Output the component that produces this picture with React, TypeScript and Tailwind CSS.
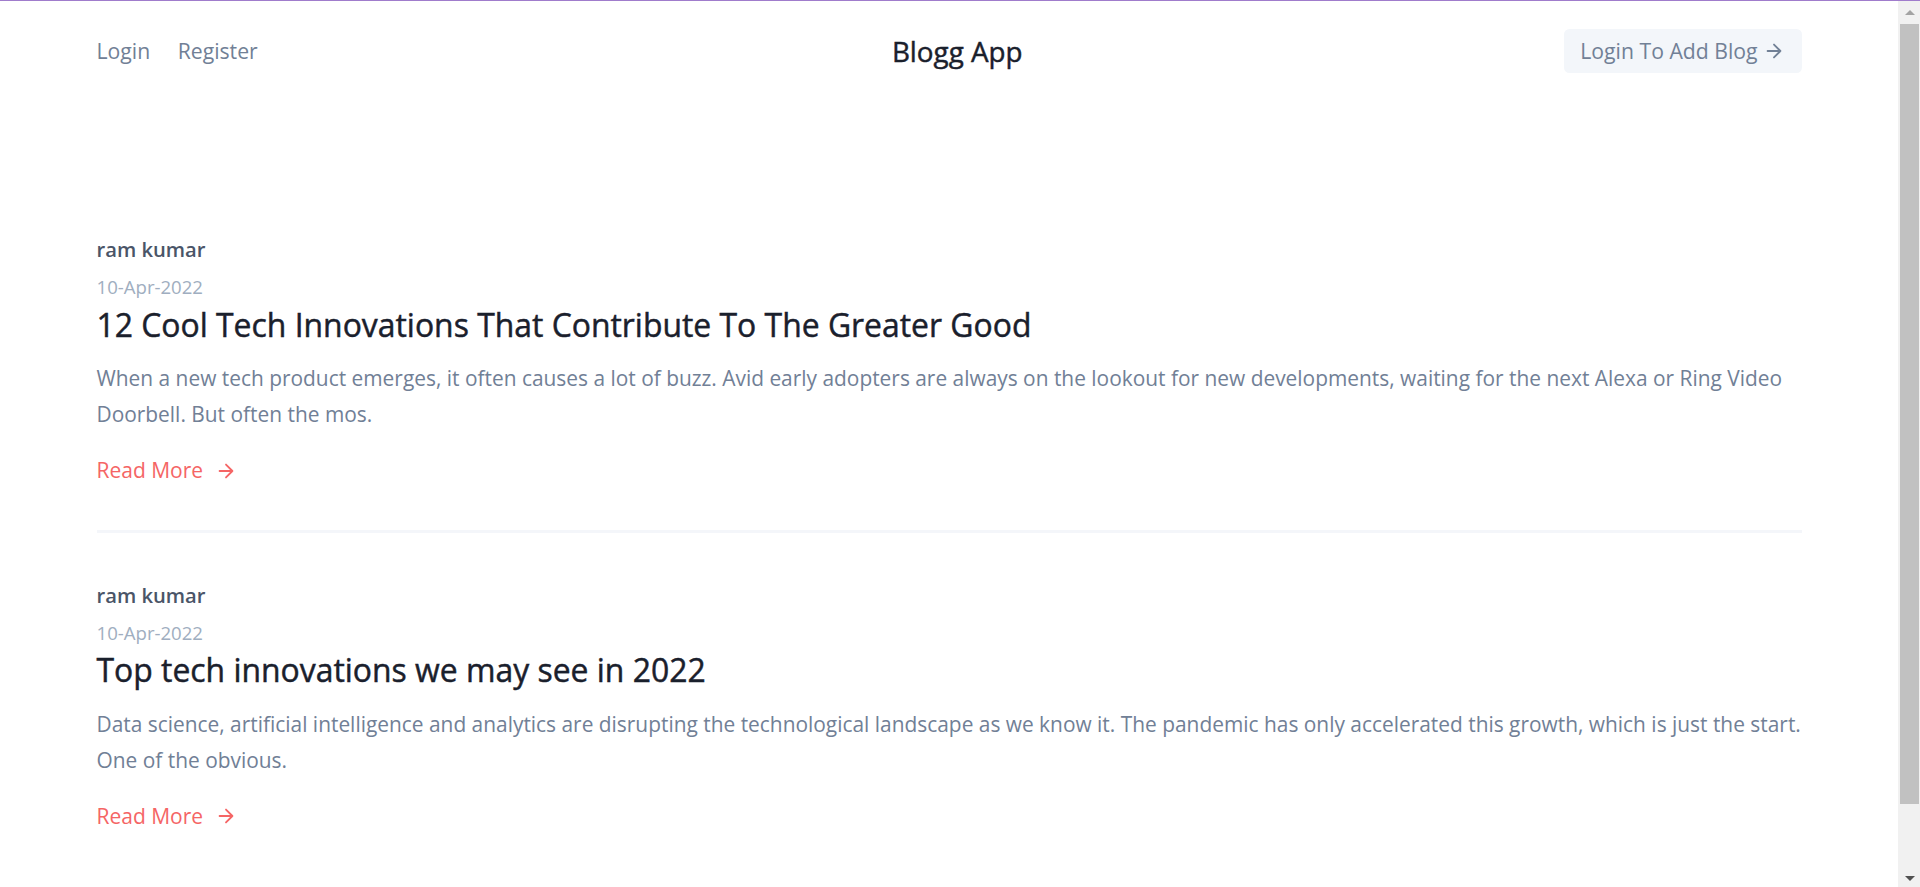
import React from "react";

function Arrow({ className }: { className: string }) {
  return (
    <svg
      className={className}
      viewBox="0 0 24 24"
      fill="none"
      stroke="currentColor"
      strokeWidth={2}
      strokeLinecap="round"
      strokeLinejoin="round"
    >
      <path d="M5 12h14M12 5l7 7-7 7" />
    </svg>
  );
}

type Post = { author: string; date: string; title: string; body: string };

const posts: Post[] = [
  {
    author: "ram kumar",
    date: "10-Apr-2022",
    title: "12 Cool Tech Innovations That Contribute To The Greater Good",
    body:
      "When a new tech product emerges, it often causes a lot of buzz. Avid early adopters are always on the lookout for new developments, waiting for the next Alexa or Ring Video Doorbell. But often the mos.",
  },
  {
    author: "ram kumar",
    date: "10-Apr-2022",
    title: "Top tech innovations we may see in 2022",
    body:
      "Data science, artificial intelligence and analytics are disrupting the technological landscape as we know it. The pandemic has only accelerated this growth, which is just the start. One of the obvious.",
  },
];

function PostItem({ post }: { post: Post }) {
  return (
    <div className="flex flex-col">
      <span className="text-[20.2px] leading-[33px] font-semibold text-[#4a5568]">{post.author}</span>
      <span className="mt-[7px] text-[18.6px] leading-[27.5px] text-[#a0aec0]">{post.date}</span>
      <h2 className="mt-[2px] text-[31.9px] leading-[44px] font-normal text-[#1a202c] [-webkit-text-stroke:0.45px_#1a202c]">{post.title}</h2>
      <p className="mt-[14.5px] mr-[-15px] text-[20.9px] leading-[35.75px] text-[#718096]">{post.body}</p>
      <div className="mt-[21.5px] flex items-center w-fit text-[21px] leading-[33px] text-[#f56565]">
        <span>Read More</span>
        <Arrow className="w-[22px] h-[22px] ml-[12px]" />
      </div>
    </div>
  );
}

export default function App() {
  return (
    <div className="h-[887px] w-full overflow-hidden flex flex-col bg-white font-['Open_Sans','Noto_Sans',sans-serif]">
      <div className="h-px w-full bg-[#a07ccc] shrink-0" />
      <div className="flex flex-1 min-h-0">
        <main className="flex-1 min-w-0 overflow-hidden">
          <header className="w-[1705px] mx-auto py-[27.5px] flex items-center">
            <nav className="w-2/5 flex items-center text-[21.2px] leading-[33px] text-[#718096]">
              <a className="mr-[27.5px]">Login</a>
              <a>Register</a>
            </nav>
            <div className="w-1/5 flex justify-center items-center text-[#1a202c] font-normal">
              <span className="ml-[16.5px] text-[27.8px] leading-[38px] [-webkit-text-stroke:0.45px_#1a202c]">Blogg App</span>
            </div>
            <div className="w-2/5 flex justify-end">
              <button className="inline-flex items-center bg-[#f3f6fa] px-[16.5px] py-[5.5px] rounded-[5.5px] text-[21.2px] leading-[33px] text-[#718096]">
                Login To Add Blog
                <Arrow className="w-[22px] h-[22px] ml-[5.5px]" />
              </button>
            </div>
          </header>
          <section className="w-[1705px] mx-auto pt-[133px]">
            <PostItem post={posts[0]} />
            <div className="mt-[43px] h-[2.75px] bg-[#f4f6fa]" />
            <div className="pt-[46px]">
              <PostItem post={posts[1]} />
            </div>
          </section>
        </main>
        <aside className="w-[22px] shrink-0 bg-[#f1f1f1] flex flex-col pl-[2px] pr-[1px]">
          <div className="h-[23px] flex items-center justify-center">
            <div className="w-0 h-0 border-x-[5.5px] border-x-transparent border-b-[5.5px] border-b-[#a3a3a3]" />
          </div>
          <div className="h-[780px] bg-[#c1c1c1]" />
          <div className="flex-1" />
          <div className="h-[17px] flex items-center justify-center">
            <div className="w-0 h-0 border-x-[5.5px] border-x-transparent border-t-[5.5px] border-t-[#505050]" />
          </div>
        </aside>
      </div>
    </div>
  );
}
